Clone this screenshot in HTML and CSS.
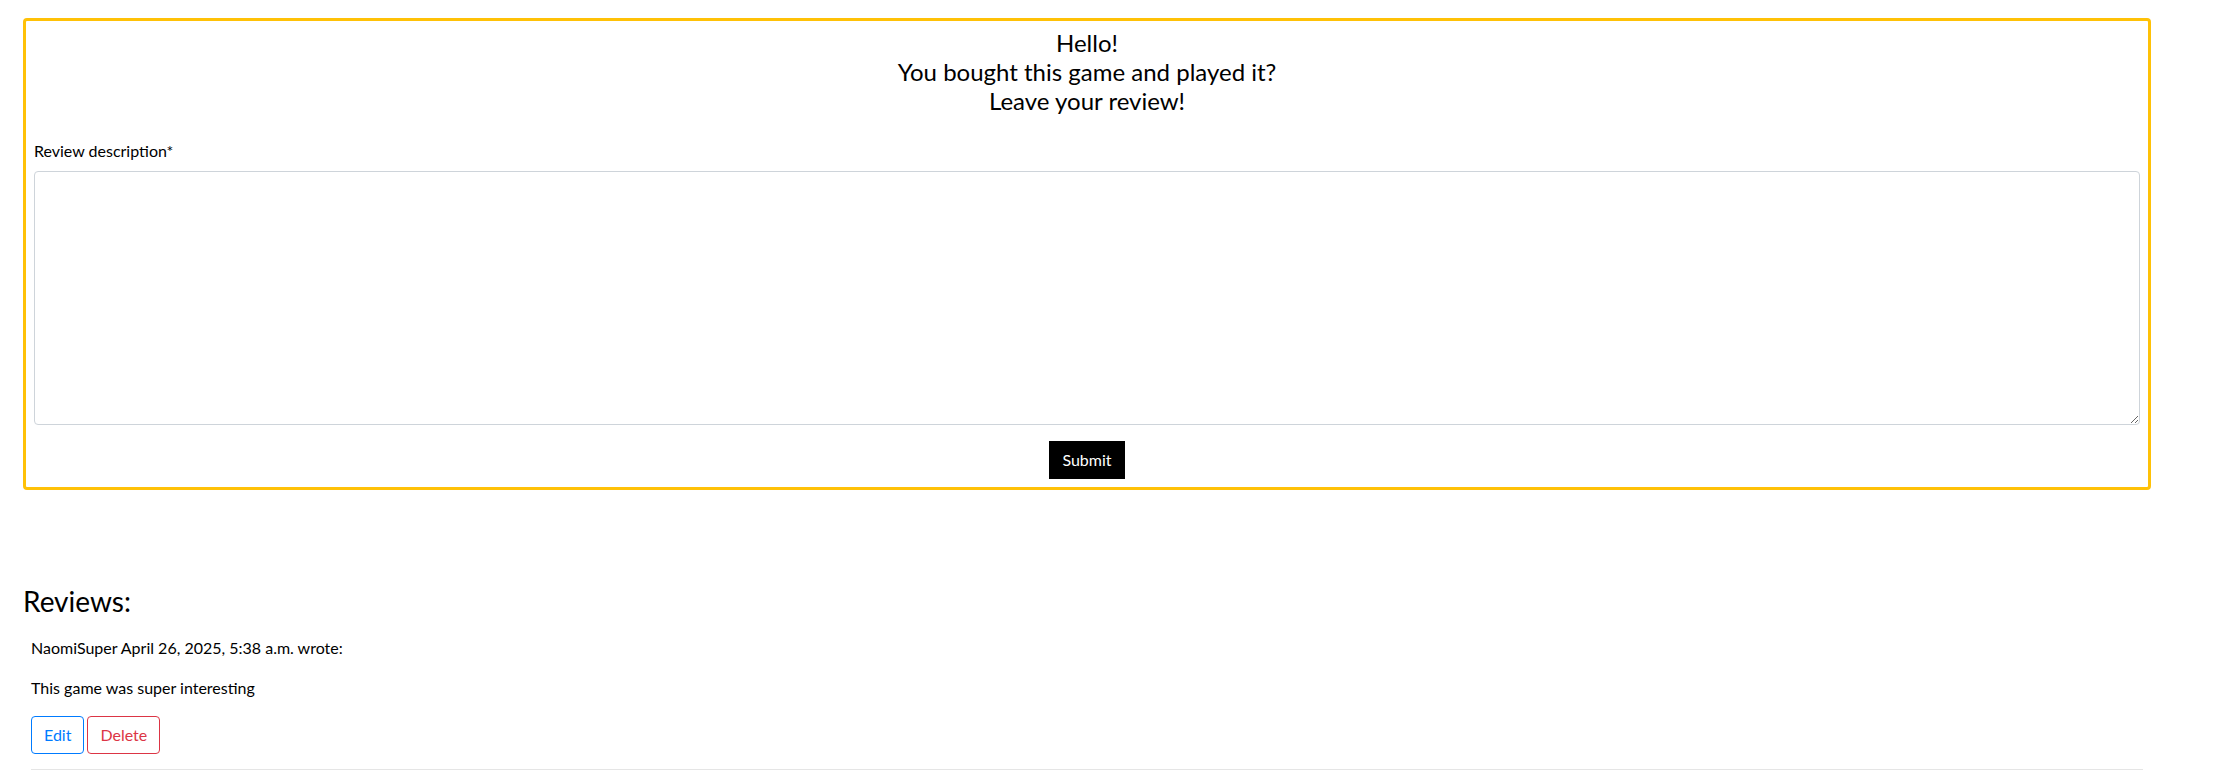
FILE: index.html
```html
<!DOCTYPE html>
<html lang="en">
<head>
<meta charset="utf-8">
<title>Game reviews</title>
<link rel="stylesheet" href="styles.css">
</head>
<body>
<section class="review-form">
  <h4 class="form-title">Hello!<br>You bought this game and played it?<br>Leave your review!</h4>
  <form class="form">
    <div class="field">
      <label class="field-label" for="desc">Review description*</label>
      <textarea class="field-input" id="desc"></textarea>
    </div>
    <button type="button" class="btn-submit">Submit</button>
  </form>
</section>
<section class="reviews">
  <h3 class="reviews-title">Reviews:</h3>
  <div class="review">
    <p class="review-meta">NaomiSuper April 26, 2025, 5:38 a.m. wrote:</p>
    <p class="review-body">This game was super interesting</p>
    <div class="review-actions">
      <a class="btn btn-edit" href="#">Edit</a>
      <a class="btn btn-delete" href="#">Delete</a>
    </div>
    <hr class="review-sep">
  </div>
</section>
</body>
</html>
```

FILE: styles.css
```css
* { box-sizing: border-box; }
html, body { margin: 0; padding: 0; background: #fff; }
body {
  font-family: Lato, "Open Sans", Arial, sans-serif;
  font-size: 16px;
  line-height: 1.5;
  color: #212529;
}
.review-form {
  margin: 18px 81px 0 23px;
  border: 3px solid #ffc107;
  border-radius: 4px;
  padding: 8px;
}
.form-title {
  margin: 0;
  text-align: center;
  font-size: 24px;
  font-weight: 400;
  line-height: 1.2;
  color: #000;
}
.form { margin: 0; }
.field { margin-top: 24px; }
.field-label {
  display: block;
  font-size: 16px;
  line-height: 24px;
  margin-bottom: 8px;
  color: #000;
}
.field-input {
  display: block;
  width: 100%;
  height: 254px;
  border: 1px solid #ced4da;
  border-radius: 4px;
  padding: 6px 12px;
  font-family: inherit;
  font-size: 16px;
  margin: 0;
}
.btn-submit {
  display: block;
  margin: 16px auto 0;
  background: #000;
  color: #fff;
  border: 1px solid #000;
  border-radius: 0;
  padding: 6px 12px;
  font-family: inherit;
  font-size: 16px;
  line-height: 24px;
}
.reviews {
  margin: 0 81px 0 23px;
}
.reviews-title {
  margin: 95px 0 0;
  font-size: 28px;
  font-weight: 400;
  line-height: 1.2;
  color: #000;
}
.review {
  padding: 0 8px;
  margin-top: 17px;
}
.review-meta, .review-body {
  margin: 0 0 16px;
  color: #000;
}
.review-actions {
  display: flex;
  gap: 3px;
  margin-top: 16px;
}
.btn {
  display: inline-block;
  padding: 6px 12px;
  border: 1px solid;
  border-radius: 4px;
  line-height: 24px;
  text-decoration: none;
  font-size: 16px;
}
.btn-edit { color: #007bff; border-color: #007bff; }
.btn-delete { color: #dc3545; border-color: #dc3545; }
.review-sep {
  margin: 15px 0 0;
  border: 0;
  border-top: 1px solid rgba(0,0,0,0.1);
}
```
